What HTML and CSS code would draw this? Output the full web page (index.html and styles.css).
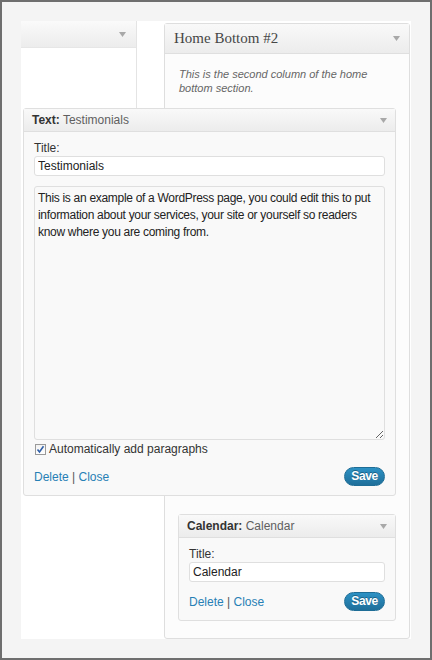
FILE: index.html
```html
<!DOCTYPE html>
<html>
<head>
<meta charset="utf-8">
<title>Widgets</title>
<link rel="stylesheet" href="styles.css">
</head>
<body>
<div class="frame">
  <div class="area">
    <div class="leftcol">
      <div class="lhead">
        <svg class="arrow" width="7" height="5" viewBox="0 0 7 5"><path d="M0 0H7L3.5 5Z"/></svg>
      </div>
    </div>
    <div class="sidebar">
      <div class="shead">
        <h3>Home Bottom #2</h3>
        <svg class="arrow" width="7" height="5" viewBox="0 0 7 5"><path d="M0 0H7L3.5 5Z"/></svg>
      </div>
      <p class="desc">This is the second column of the home bottom section.</p>
      <div class="widgets">
        <div class="widget wide">
          <div class="whead">
            <span><b>Text:</b> Testimonials</span>
            <svg class="arrow" width="7" height="5" viewBox="0 0 7 5"><path d="M0 0H7L3.5 5Z"/></svg>
          </div>
          <div class="wbody">
            <label class="lbl">Title:</label>
            <input class="inp" type="text" value="Testimonials">
            <textarea class="txt">This is an example of a WordPress page, you could edit this to put information about your services, your site or yourself so readers know where you are coming from.</textarea>
            <div class="check">
              <span class="box"><svg width="9" height="9" viewBox="0 0 9 9"><path d="M1.5 4.5L3.5 7L7.5 1.2" fill="none" stroke="#2f5fa8" stroke-width="1.6"/></svg></span>
              <span>Automatically add paragraphs</span>
            </div>
            <div class="actions">
              <span class="links"><a href="#">Delete</a> <span class="sep">|</span> <a href="#">Close</a></span>
              <button class="save" type="button">Save</button>
            </div>
          </div>
        </div>
        <div class="widget cal">
          <div class="whead">
            <span><b>Calendar:</b> Calendar</span>
            <svg class="arrow" width="7" height="5" viewBox="0 0 7 5"><path d="M0 0H7L3.5 5Z"/></svg>
          </div>
          <div class="wbody">
            <label class="lbl">Title:</label>
            <input class="inp" type="text" value="Calendar">
            <div class="actions short">
              <span class="links"><a href="#">Delete</a> <span class="sep">|</span> <a href="#">Close</a></span>
              <button class="save" type="button">Save</button>
            </div>
          </div>
        </div>
      </div>
    </div>
  </div>
</div>
</body>
</html>
```

FILE: styles.css
```css
html, body {
  margin: 0;
  padding: 0;
  background: #f4f4f4;
  font-family: "Liberation Sans", Arial, sans-serif;
}

.frame {
  width: 432px;
  height: 660px;
  box-sizing: border-box;
  border: 2px solid #6e6e6e;
  padding: 19px;
  background: #f4f4f4;
}

.area {
  display: flex;
  align-items: flex-start;
  background: #fff;
  height: 618px;
  padding-right: 1px;
  box-sizing: border-box;
}

.arrow {
  display: block;
  fill: #a8a8a8;
}

.leftcol {
  flex: none;
  width: 115px;
  height: 300px;
  border-right: 1px solid #e4e4e4;
}

.lhead {
  height: 26px;
  border-bottom: 1px solid #e6e6e6;
  background: linear-gradient(#fafafa, #ececec);
  display: flex;
  align-items: center;
  justify-content: flex-end;
  padding-right: 10px;
}

.sidebar {
  flex: none;
  margin: 2px 0 0 27px;
  width: 246px;
  height: 616px;
  box-sizing: border-box;
  border: 1px solid #dedede;
  border-radius: 3px;
  background: #fcfcfc;
}

.shead {
  height: 29px;
  border-bottom: 1px solid #dfdfdf;
  background: linear-gradient(#f9f9f9, #ececec);
  display: flex;
  align-items: center;
  justify-content: space-between;
  padding: 0 9px;
}

.shead h3 {
  margin: 0;
  font-family: "Liberation Serif", "Times New Roman", serif;
  font-weight: normal;
  font-size: 15px;
  color: #464646;
}

.desc {
  margin: 13px 30px 0 14px;
  font-style: italic;
  font-size: 11px;
  line-height: 14px;
  color: #666;
}

.widgets {
  margin-top: 13px;
  padding: 0 13px;
}

.widget {
  border: 1px solid #dfdfdf;
  border-radius: 3px;
  background: #f9f9f9;
}

.wide {
  position: relative;
  z-index: 1;
  margin-left: -155px;
}

.cal {
  margin-top: 18px;
}

.whead {
  height: 22px;
  border-bottom: 1px solid #dfdfdf;
  background: linear-gradient(#f9f9f9, #ececec);
  display: flex;
  align-items: center;
  justify-content: space-between;
  padding: 0 8px;
  font-size: 12px;
  color: #5f5f5f;
}

.whead b {
  color: #333;
}

.wbody {
  padding: 9px 10px;
}

.lbl {
  display: block;
  font-size: 12px;
  line-height: 14px;
  color: #333;
}

.inp {
  display: block;
  width: 100%;
  height: 20px;
  box-sizing: border-box;
  margin: 1px 0 0;
  padding: 0 3px;
  border: 1px solid #dfdfdf;
  border-radius: 3px;
  background: #fff;
  font-family: "Liberation Sans", Arial, sans-serif;
  font-size: 12px;
  color: #222;
  outline: none;
}

.txt {
  display: block;
  width: 100%;
  height: 254px;
  box-sizing: border-box;
  margin: 10px 0 0;
  padding: 3px 3px;
  border: 1px solid #dfdfdf;
  border-radius: 3px;
  background: #f9f9f9;
  font-family: "Liberation Sans", Arial, sans-serif;
  font-size: 12px;
  letter-spacing: -0.3px;
  line-height: 17px;
  color: #222;
  outline: none;
}

.check {
  margin-top: 2px;
  display: flex;
  align-items: center;
  gap: 3px;
  height: 14px;
  font-size: 12px;
  color: #333;
  padding-left: 1px;
}

.box {
  width: 9px;
  height: 9px;
  border: 1px solid #9a9a9a;
  background: linear-gradient(#f2f2f2, #fff);
  display: flex;
  align-items: center;
  justify-content: center;
}

.box svg {
  display: block;
}

.actions {
  margin-top: 11px;
  display: flex;
  align-items: center;
  justify-content: space-between;
}

.actions.short {
  margin-top: 10px;
}

.links {
  font-size: 12px;
  color: #555;
}

.links a {
  color: #2780b5;
  text-decoration: none;
}

.save {
  height: 19px;
  padding: 0 6px;
  border: 1px solid #1e6d96;
  border-radius: 10px;
  background: linear-gradient(#2c91c4, #1f6f9a);
  color: #fff;
  font-family: "Liberation Sans", Arial, sans-serif;
  font-weight: bold;
  font-size: 12px;
  letter-spacing: -0.3px;
  line-height: 17px;
  text-shadow: 0 -1px 0 rgba(0, 0, 0, 0.3);
}
```
